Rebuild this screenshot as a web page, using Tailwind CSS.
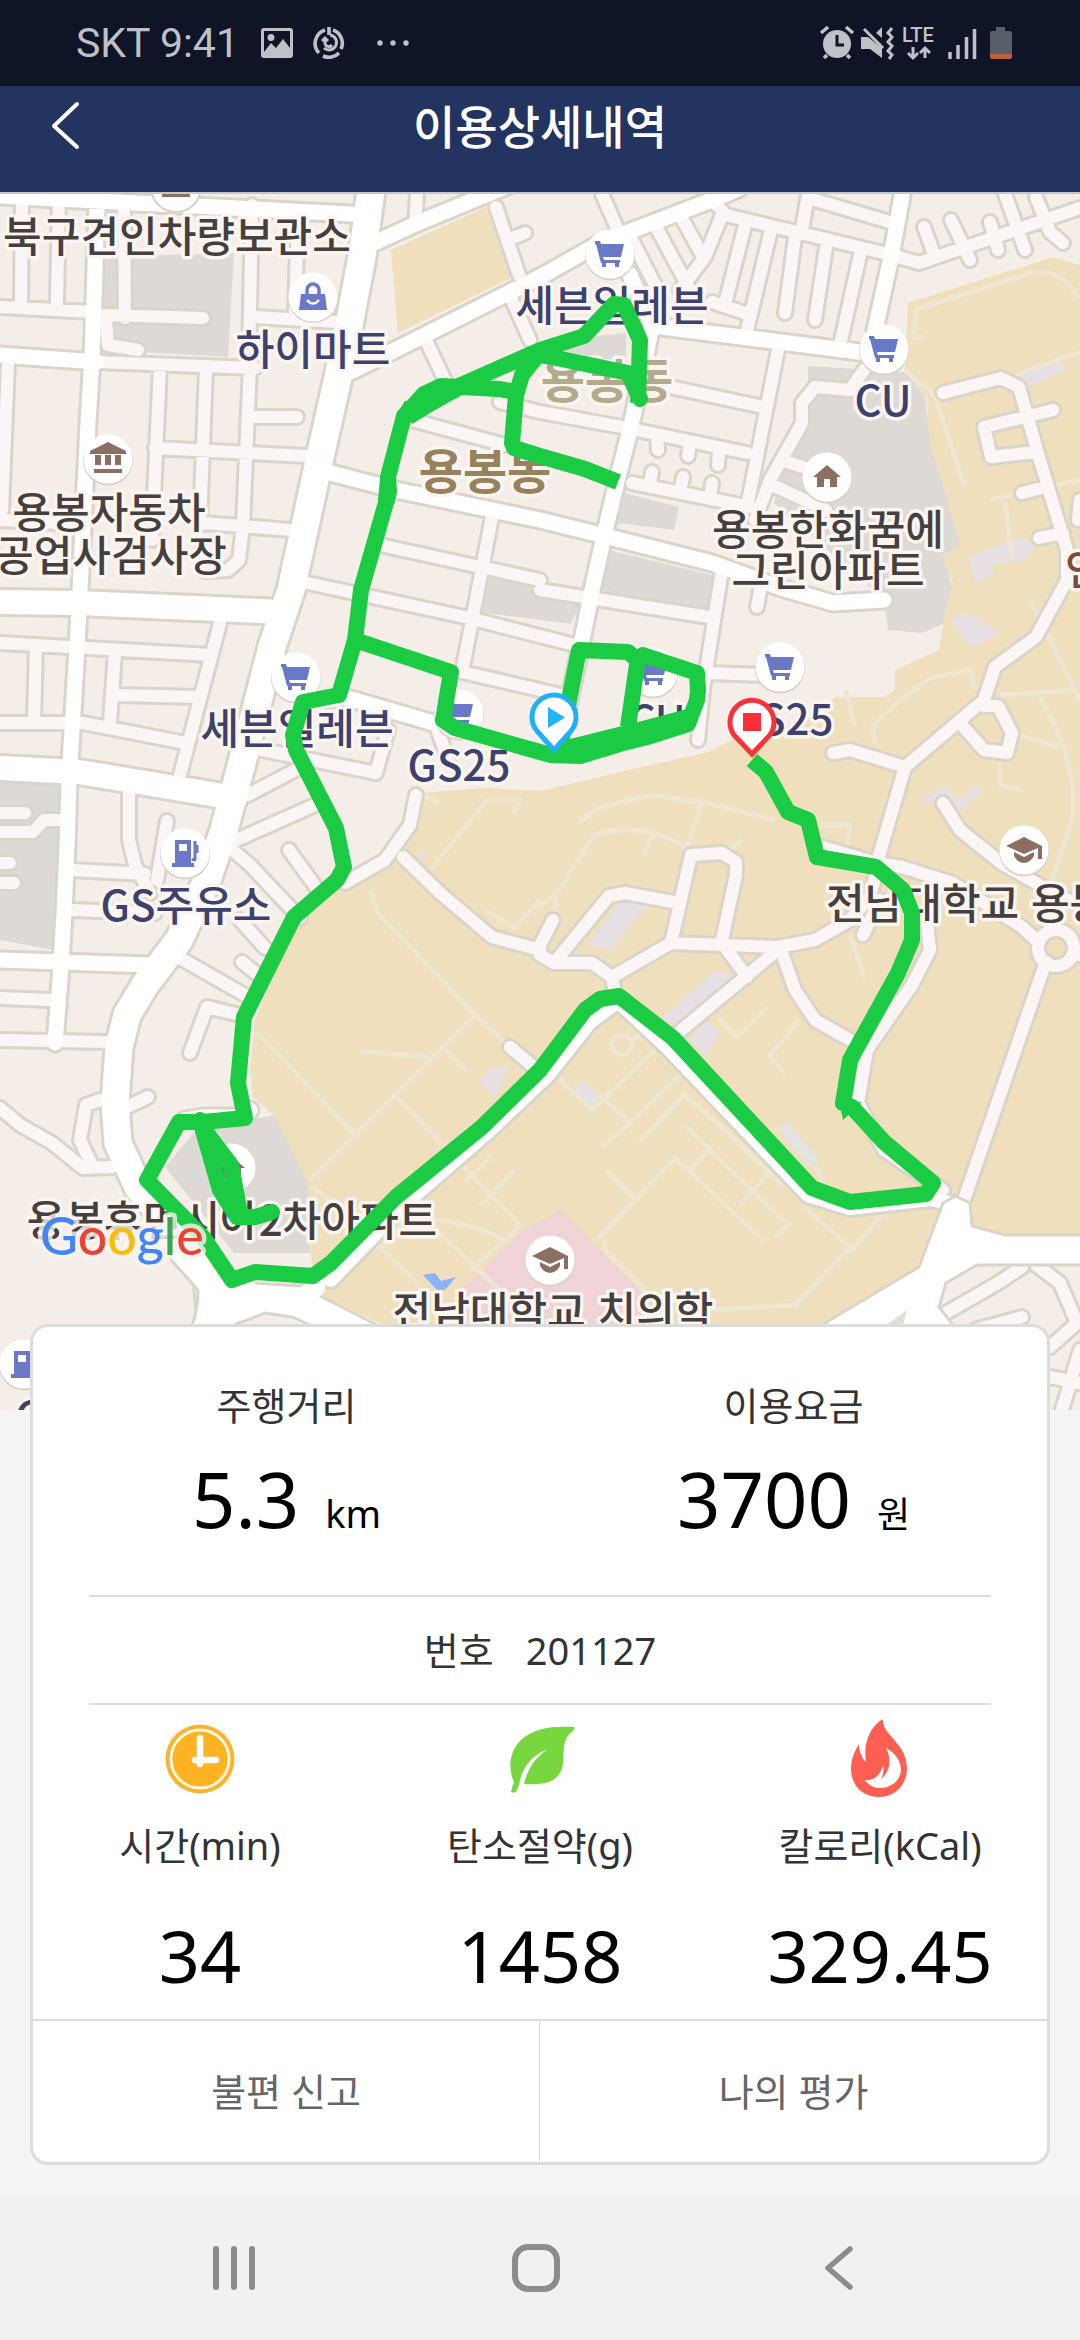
<!DOCTYPE html>
<html lang="ko">
<head>
<meta charset="utf-8">
<meta name="viewport" content="width=device-width, initial-scale=1">
<title>이용상세내역</title>
<script src="https://cdn.jsdelivr.net/npm/@tailwindcss/browser@4"></script>
</head>
<body class="flex min-h-screen flex-col bg-[#f4f4f4] font-['Noto_Sans','Noto_Sans_CJK_KR',sans-serif] text-[38px] text-[#333]">

<!-- System status bar -->
<div class="flex h-[86px] items-center justify-between bg-[#0f1526] pr-[50px] pl-[76px] text-[#bfc1c6]">
  <div class="flex items-center">
    <span class="font-['Roboto',sans-serif] text-[41px] leading-[48px]">SKT 9:41</span>
    <svg class="ml-[22px] h-8 w-8" viewBox="0 0 32 32" fill="currentColor"><path fill-rule="evenodd" d="M3 1h26a3 3 0 0 1 3 3v24a3 3 0 0 1-3 3H3a3 3 0 0 1-3-3V4a3 3 0 0 1 3-3Zm0 3v21l7-9 5 5 7-9 7 9V4H3Zm7 3a3.500 3.500 0 1 1 0 7 3.500 3.500 0 0 1 0-7Z"/></svg>
    <svg class="ml-[20px] h-8 w-8" viewBox="0 0 32 32" fill="none" stroke="currentColor" stroke-width="3.600"><path d="M12 3A14 14 0 0 0 6 26M10 29A14 14 0 0 0 26 26M28 22A14 14 0 0 0 20 3"/><path d="M17 8a7.500 7.500 0 1 1-6 13M9 14l3-3 3 3M12 12v5a4 4 0 0 0 7 1" stroke-width="3"/><path d="M16 0v8"/></svg>
    <svg class="ml-[32px] h-2 w-8" viewBox="0 0 32 8" fill="currentColor"><circle cx="3" cy="4" r="2.700"/><circle cx="16" cy="4" r="2.700"/><circle cx="29" cy="4" r="2.700"/></svg>
  </div>
  <svg class="h-16 w-[220px]" viewBox="0 0 220 64" fill="currentColor">
    <circle cx="27" cy="33" r="14"/>
    <path d="M11 22l7-6M43 22l-7-6M17 44l-3 3M37 44l3 3" stroke="currentColor" stroke-width="3.500"/>
    <path d="M27 24v10h7" fill="none" stroke="#0f1526" stroke-width="3"/>
    <path d="M51 26h7l14 11v10l-12-9h-9zM66 22l6-6v11z"/>
    <path d="M54 18l19 19" stroke="currentColor" stroke-width="3"/>
    <path d="M82 17l-4 5 4 4-4 5 4 4-4 5 4 4-3 4" fill="none" stroke="currentColor" stroke-width="3"/>
    <text x="92" y="31" class="font-['Roboto',sans-serif] text-[20px] font-medium">LTE</text>
    <path d="M103 36v11m-5-5 5 5 5-5M115 47V37m-5 5 5-5 5 5" fill="none" stroke="currentColor" stroke-width="3"/>
    <path d="M140 48v-7M148 48V34M156.500 48V26M164.500 48V18" stroke="currentColor" stroke-width="3.500"/>
    <path d="M186 16h9v4h5q2 0 2 2v11h-22V22q0-2 2-2h4zM180 33h22v10h-22z" fill="#585e68"/>
    <path d="M180 43h22v3q0 2-2 2h-18q-2 0-2-2z" fill="#c1603f"/>
  </svg>
</div>

<!-- App header -->
<header class="relative border-b-2 border-[#c5c5cc] bg-[#243461] pb-[30px] text-white">
  <a href="#" aria-label="뒤로" class="absolute top-[14px] left-[46px] block">
    <svg class="h-[52px] w-10" viewBox="0 0 40 52" fill="none" stroke="currentColor" stroke-width="4" stroke-linecap="round" stroke-linejoin="round"><path d="M31 4 8 26l23 21"/></svg>
  </a>
  <h1 class="text-center font-['Noto_Sans_CJK_KR',sans-serif] text-[46px] leading-[76px] font-medium">이용상세내역</h1>
</header>

<!-- Ride map -->
<svg class="block w-full bg-[#f5eee8]" viewBox="0 194 1080 1216" role="img" aria-label="주행 경로 지도">
  <defs>
    <path id="minor" d="M22 194L21 303M59 194L57 303M124 205L125 318M0 307L93 312M103 315L203 318M106 320L108 345L138 350M252 205L249 360M298 215L295 312M255 317L337 322M97 362L255 368
      M8 363L2 510M160 366L152 540M206 368L200 525M250 365L243 525M155 448L306 456M255 417L297 417M203 523L290 530M243 525L239 560L228 570L205 571M0 520L80 524
      M0 643L210 655M36 645L34 722M115 653L110 722M117 695L200 697M0 723L83 723L186 743M220 623L180 775M248 795L305 765M232 842L315 805M262 750L376 773L388 730
      M129 793L129 840L135 865L150 893M167 821L157 880M72 870L145 874M227 845L250 865L300 918M289 850L318 890M72 910L155 913M0 813L25 813M0 832L33 832L44 820L62 820M0 863L10 863M0 883L14 883
      M240 920L265 948M180 958L250 998M240 1015L207 1007L190 1053M242 962L262 978M0 998L50 1000M0 1040L107 1042M148 1097L127 1107M0 1108L20 1125L52 1143L83 1168L112 1167M100 1100L86 1105L80 1140L92 1165
      M417 194L415 225M496 207L519 275M515 237L525 233M425 338L447 385M512 300L530 340M412 420L505 445M380 545L485 568L540 580M492 517L462 672M303 582L465 617L575 645M462 672L540 690L560 695M540 590L709 617M722 570L703 690L698 740M708 673L765 675M760 590L757 607M436 725L448 760
      M602 194L617 228M655 225L690 290M632 240L655 285M680 215L702 255M722 215L705 257L680 290M710 198L726 215L900 257M808 194L802 230M815 200L890 222M745 225L726 300M771 230L747 330M795 237L785 313M826 247L815 320M860 255L840 345M712 302L745 313
      M898 257L919 263L1080 208M924 227L935 257M951 220L970 260M990 222L998 250M1005 194L1025 250M1036 197L1050 232L1063 243
      M778 350L747 507M670 387L763 407M500 402L540 412L622 427L747 453M632 483L750 507M657 437L658 450M690 442L688 456M719 450L718 465M652 472L650 485M683 477L680 492M712 483L710 497
      M755 520L770 480L802 423L802 403L815 387L850 390L864 370M781 460L812 470M770 484L826 510
      M943 393L1001 378L1019 387L1039 457L1067 550L1067 580L1036 637L995 667L984 700L905 767L877 863M1053 410L984 427L991 457L1035 452M1022 493L1046 487M1039 538L1063 533M1080 500L1078 520
      M984 706L998 706L1012 733L1007 753L984 750L960 723M905 767L850 750L833 753M943 803L960 830L1001 863L1057 895L1080 905
      M822 847L877 863L902 867L953 883L1022 927L1036 940M877 870L870 897L850 920L815 940L778 947L671 943L612 977L592 963L554 963L540 955L540 945L553 920
      M554 963L595 913L609 896L625 893L678 903M671 943L691 855L722 853L736 862L736 875L722 940M722 943L747 977M781 947L678 1033M781 950L795 990L815 1020L850 1040M863 935L880 900
      M926 913L930 950L912 985L867 1050L858 1103L884 1150L943 1190M416 795L410 825L385 860L345 883M403 857L440 893L492 937L540 950M510 1047L537 1070
      M1043 970L965 1197M1080 955L1074 948A18 18 0 1 0 1038 948A18 18 0 1 0 1074 948M1043 970L1047 962
      M1022 1267L998 1283L946 1313M1036 1265L1060 1283L1077 1323L1050 1347M1022 1317L975 1330M1080 1350L1062 1410M1050 1377L1080 1383M612 977L616 1000"/>
    <path id="campusroad" d="M331 1280L400 1208L490 1130L548 1075L590 1022L618 1001L668 1048L808 1195L850 1208L930 1199L960 1205"/>
    <path id="major" d="M0 196L351 214M97 205L94 300L92 357L88 423L80 590L77 647L73 713L69 780L67 847L64 913L60 980L55 1043M0 355L97 362M372 244L420 222L510 185M350 372L395 350L540 277L602 242L712 200L740 188
      M630 275L652 325L642 375L630 430L619 473L607 523L592 590L581 645L566 715M654 326L781 342L867 353M903 190L891 257L875 330M331 473L396 490L540 520L609 537L712 563L781 588L833 603L884 600M0 960L150 965M310 704L344 697L437 724M185 1120L204 1117L245 1117L250 1110"/>
    <path id="trunk" d="M371 190L362 257L349 325L339 373L320 457L291 590L272 647L248 740L224 830L207 880L179 940L145 985L127 1015L119 1047L115 1103L118 1143L138 1187L172 1227L207 1270L213 1330"/>
    <path id="cross" d="M0 602L79 603L282 612M0 768L79 772L235 798"/>
    <g id="cart"><circle cy="1.500" r="25" fill="#d8d2cb"/><circle r="24.500" fill="#fff"/><path d="M-15-13h5l1 3h23l-3 13H-7l1 3H10v3H-9l-5-19h-1zM-8 9h4v4h-4zM5 9h4v4H5z" fill="#6a78c8"/></g>
    <g id="home"><circle cy="1.500" r="25" fill="#d8d2cb"/><circle r="24.500" fill="#fff"/><path d="M0-12L14 0H10V10H3V2H-3V10H-10V0H-14z" fill="#8d6e63"/></g>
    <g id="cap"><circle cy="1.500" r="25" fill="#d8d2cb"/><circle r="24.500" fill="#fff"/><path d="M0-13L18-4V9H14V-2L0 4L-18-4zM-10 2L0 7L10 2V6Q6 13 0 13Q-6 13-10 6z" fill="#8d6e63"/></g>
    <g id="fuel"><circle cy="1.500" r="25" fill="#d8d2cb"/><circle r="24.500" fill="#fff"/><path fill-rule="evenodd" d="M-10-13H6V10H9V14H-13V10H-10zM-6-9V-2H2V-9z" fill="#6a78c8"/><path d="M10-12V6Q10 8 7 6M12-8V0" fill="none" stroke="#6a78c8" stroke-width="3"/></g>
    <g id="civic"><circle cy="1.500" r="25" fill="#d8d2cb"/><circle r="24.500" fill="#fff"/><path d="M0-17L18-8V-5H-18V-8zM-13-4H-7V6H-13zM-3-4H3V6H-3zM7-4H13V6H7zM-14 10H14V14H-14z" fill="#8d6e63"/></g>
  </defs>

  <!-- Land use -->
  <g fill="#dddad5">
    <path d="M105 257L234 253L228 357L103 350z"/>
    <path d="M808 366L905 372L925 395L930 440L960 543L945 560L953 590L945 623L922 633L888 630L884 600L845 565L774 503L781 473L791 453L808 423z"/>
    <path d="M624 493L679 507L674 530L617 523zM609 550L720 577L712 612L602 590zM486 577L585 592L571 624L478 612zM588 337L626 333L626 363L557 350z"/>
    <path d="M0 783L62 783L53 950L0 940zM165 1167L196 1130L275 1115L308 1177L310 1253L234 1253z"/>
  </g>
  <path fill="#efdfbc" d="M391 250L486 207L511 278L398 333zM420 793L485 788L540 791L620 772L712 751L740 735L800 722L836 697L884 697L895 690L895 670L939 650L945 613L953 583L943 557L960 543L929 440L927 397L905 370L908 303L1053 257L1080 265V1235H1005L970 1227L943 1203L919 1267L822 1323V1340H400L379 1323L320 1295L310 1253L308 1183L275 1117L253 1097L250 1070L255 1020L275 970L300 920L344 883L396 860L417 830z"/>
  <path fill="#efd3d7" d="M520 1233L559 1210L633 1283L670 1323V1340H440L465 1287z"/>
  <path fill="#e6e0e4" d="M588 945L618 903L650 903L610 950zM660 1020L715 970L735 975L680 1025zM688 1040L708 1020L720 1033L705 1055zM573 1090L584 1079L600 1098L588 1106zM478 1082L490 1070L510 1065L495 1097zM950 620L968 612L1000 633L972 648zM922 800L945 785L960 800L975 785L982 792L960 812zM968 557L1020 537L1035 545L1025 560L990 565L995 575L975 582zM1020 375L1062 362L1066 370L1030 386zM416 855L425 850L426 860z"/>
  <path fill="#e3e3e3" d="M778 1129L789 1121L818 1160L810 1167z"/>
  <path fill="#8ab4f8" d="M423 1275L435 1273L441 1281L456 1277L445 1290H437z"/>

  <!-- Footpaths -->
  <g fill="none" stroke="#efe6d1" stroke-width="5" stroke-linejoin="round">
    <path d="M913 336L917 309L1032 273Q1062 268 1078 298M1080 352L1010 377M912 337H925M905 370L935 395L964 486M990 500L1080 480M1005 502L1012 555M1030 600L1050 640L1080 700M1000 695L1075 690M1035 690Q1080 760 1072 820L1052 880M1010 733L1060 747M1000 755V785L1022 790M855 725L845 690M875 745L873 725L900 700L930 678L970 670L975 690"/>
    <path d="M540 905L556 895L594 835Q640 820 686 847M653 832L644 855M579 823L598 808L650 795L702 802L775 820M702 802L688 845M553 930L556 890M820 825H850L846 850M730 850L742 840M425 797L439 802M430 870L487 800H520L513 815M485 910L515 928L540 900M370 890L378 913L475 1015L505 1042M850 935L865 980"/>
    <path d="M257 1032L355 1135M360 1051L428 1057M475 1015L310 1180M395 1095L520 1225M442 1047L467 1072M492 1155L465 1182M515 1170L480 1205M310 1185L330 1200L420 1285M380 1250L440 1180M420 1215L500 1290M470 1270L522 1225M385 1240Q420 1200 505 1240"/>
    <path d="M550 1070L592 1110L660 1045M600 1095L630 1123L602 1147M630 1123L685 1070M638 1143L684 1095L725 1130L784 1187M684 1125L788 1225L775 1238M597 1240L675 1158L765 1242M605 1240V1250L645 1290M690 1170L708 1150M606 1170L636 1200M740 1205L770 1172M804 1207L850 1247L795 1305L710 1310M885 1212L848 1253M717 1017L737 1037L768 1007M800 1020L770 1055L785 1075M816 1165L824 1185"/>
    <circle cx="622" cy="1045" r="10"/><path d="M632 1040L645 1030"/>
  </g>

  <!-- Streets: casing first, then surface -->
  <g fill="none" stroke-linecap="round" stroke-linejoin="round">
    <g stroke="#dad5ca">
      <use href="#minor" stroke-width="18"/><use href="#campusroad" stroke-width="20"/><use href="#major" stroke-width="21"/><use href="#cross" stroke-width="30"/><use href="#trunk" stroke-width="33"/>
    </g>
    <use href="#minor" stroke="#fcf5f5" stroke-width="12"/>
    <g stroke="#fff"><use href="#campusroad" stroke-width="14"/><use href="#major" stroke-width="15"/><use href="#cross" stroke-width="24"/><use href="#trunk" stroke-width="27"/></g>
  </g>
  <g fill="#fff" stroke="#dad5ca" stroke-width="3">
    <path stroke="none" d="M150 1200L180 1215L234 1283L262 1280L300 1286L331 1270L322 1296L379 1326V1345H320L292 1317L265 1313L234 1325L225 1345H192L198 1290L165 1253z"/>
    <path d="M198 1290L165 1253M320 1296L379 1326M192 1325Q198 1310 198 1290M234 1325L265 1313L292 1317L312 1326M255 1283L300 1286L308 1280" fill="none"/>
    <path d="M943 1203L955 1196L970 1203L972 1226L1005 1235H1084V1265H977L946 1283L939 1307L965 1340H800L830 1320L919 1267z"/>
  </g>
  <path d="M888 1324L907 1310L902 1330z" fill="#e5ddd4"/>

  <!-- Places -->
  <circle cx="176" cy="187" r="25" fill="#fff" stroke="#d8d2cb" stroke-width="2"/><path d="M162 194H190V197H162z" fill="#8d6e63"/>
  <use href="#civic" x="108" y="459"/>
  <circle cx="313" cy="298" r="25" fill="#d8d2cb"/><circle cx="313" cy="297" r="24.500" fill="#fff"/>
  <path d="M301 294H325L327 310H299z" fill="#6a78c8"/><path d="M307 295V290A6 6 0 0 1 319 290V295" fill="none" stroke="#6a78c8" stroke-width="3.500"/><path d="M307 300Q313 307 319 300" fill="none" stroke="#fff" stroke-width="2.500"/>
  <use href="#cart" x="610" y="254"/><use href="#cart" x="884" y="349"/><use href="#home" x="827" y="477"/><use href="#cart" x="296" y="677"/><use href="#cart" x="459" y="714"/>
  <use href="#fuel" x="185" y="853"/><use href="#cart" x="653" y="672"/><use href="#cart" x="780" y="667"/><use href="#cap" x="1024" y="850"/><use href="#home" x="231" y="1168"/><use href="#cap" x="550" y="1260"/><use href="#fuel" x="24" y="1364"/>

  <g class="font-['Noto_Sans_CJK_KR',sans-serif] text-[42px] font-medium" text-anchor="middle" fill="#45403d" stroke="#faf5f1" stroke-width="7" stroke-linejoin="round" paint-order="stroke">
    <text x="177" y="252">북구견인차량보관소</text>
    <text x="109" y="528">용봉자동차</text>
    <text x="111" y="571">공업사검사장</text>
    <text x="828" y="545">용봉한화꿈에</text>
    <text x="828" y="586">그린아파트</text>
    <text x="826" y="919" text-anchor="start">전남대학교 용봉캠퍼스</text>
    <text x="232" y="1236">용봉휴먼시아2차아파트</text>
    <text x="553" y="1327">전남대학교 치의학</text>
    <text x="1065" y="585" text-anchor="start" fill="#7b4a3a">인문대학</text>
    <g fill="#3e416b">
      <text x="313" y="365">하이마트</text>
      <text x="612" y="321">세븐일레븐</text>
      <text x="883" y="416">CU</text>
      <text x="297" y="744">세븐일레븐</text>
      <text x="459" y="781">GS25</text>
      <text x="186" y="921">GS주유소</text>
      <text x="657" y="736">CU</text>
      <text x="782" y="735">GS25</text>
      <text x="15" y="1432" text-anchor="start">GS25</text>
    </g>
    <g class="text-[48px] font-bold">
      <text x="485" y="489" fill="#97825c">용봉동</text>
      <text x="607" y="398" fill="#b3aa8b">용봉동</text>
    </g>
  </g>

  <!-- Ridden route -->
  <g fill="none" stroke="#1bcb43" stroke-width="16" stroke-linejoin="round">
    <path d="M618 482L585 469L540 456L514 448L512 443L516 395L522 375L538 355L547 356L628 373L640 399L635 385M638 403L640 340L624 305L614 304L584 336L540 350L461 385L406 416"/>
    <path d="M516 392L499 389L441 386L424 394L404 416L388 477L389 492L361 590L355 640L339 695L303 702L293 735L296 750L336 828L344 867L337 880L294 917L244 1017L238 1083L245 1118L203 1122L179 1122L147 1180L203 1237L232 1280L255 1272L313 1276L331 1263L396 1197L482 1127L540 1070L585 1010L600 999L619 996L673 1038L812 1188L850 1202L926 1194L933 1183L884 1142L852 1107L843 1103L850 1060L898 973L912 940V913L903 890L876 867L817 857L808 820L788 812L766 772L752 760"/>
    <path d="M200 1120L220 1190L237 1217L255 1217L272 1212M203 1128L231 1165L240 1213" stroke-linecap="round"/>
    <path d="M438 388L455 390L406 416L412 404M355 640L451 672L443 720L455 728L540 752L551 755L580 756L623 743L647 737L688 724L697 700L698 690L697 673L643 655L638 658L628 727M560 748L569 700L579 650L628 652L640 662M551 752L595 741L643 729L688 717"/>
  </g>
  <path d="M565 745L600 740L640 728L645 740L582 762H552zM410 400L460 380V395L412 424zM380 478L397 490L394 505L378 500zM840 1105L862 1102L843 1120z" fill="#1bcb43"/>

  <!-- Start and end pins -->
  <g stroke-width="5" fill="#fff">
    <path d="M554 750L537 731A22 22 0 1 1 571 731z" stroke="#22b0f5"/>
    <path d="M548 707V728L565 717.500z" fill="#1fb4fb"/>
    <path d="M752 754L734 735A22 22 0 1 1 770 735z" stroke="#fa303a"/>
    <path d="M743 713H761V731H743z" fill="#fc2d37"/>
  </g>

  <text x="40" y="1255" class="font-['Lato',sans-serif] text-[52px] font-medium" stroke="#f7f3ee" stroke-opacity=".8" stroke-width="9" paint-order="stroke" stroke-linejoin="round"><tspan fill="#4285f4">G</tspan><tspan fill="#ea4335">o</tspan><tspan fill="#fbbc05">o</tspan><tspan fill="#4285f4">g</tspan><tspan fill="#34a853">l</tspan><tspan fill="#ea4335">e</tspan></text>
</svg>

<!-- Ride summary -->
<main class="relative mx-[30px] -mt-[86px] mb-[30px] overflow-hidden rounded-[18px] border-[3px] border-[#dcdcdc] bg-white">
  <dl class="grid grid-cols-2 pt-[50px] pb-[46px] text-center">
    <div>
      <dt class="leading-[56px]">주행거리</dt>
      <dd class="mt-[16px] flex items-baseline justify-center gap-[26px] text-black"><span class="text-[76px] leading-[100px]">5.3</span><span class="leading-[56px]">km</span></dd>
    </div>
    <div>
      <dt class="leading-[56px]">이용요금</dt>
      <dd class="mt-[16px] flex items-baseline justify-center gap-[26px] text-black"><span class="text-[76px] leading-[100px]">3700</span><span class="text-[36px] leading-[56px]">원</span></dd>
    </div>
  </dl>
  <dl class="mx-14 flex justify-center gap-[32px] border-y-2 border-[#dcdcdc] leading-[106px]">
    <dt>번호</dt>
    <dd>201127</dd>
  </dl>
  <dl class="-mx-[3px] grid grid-cols-3 pt-[14px] pb-[14px] text-center">
    <div>
      <dt class="leading-[56px]">
        <svg class="mx-auto mb-[20px] h-[78px] w-[78px]" viewBox="0 0 78 78"><circle cx="39" cy="40" r="34.500" fill="#f9b233"/><circle cx="39" cy="40" r="29" fill="#ffb224" stroke="#fff9d8" stroke-width="3"/><path d="M39 19V45M34 41H55" stroke="#fff" stroke-width="6.500" stroke-linecap="round"/></svg>
        시간(min)
      </dt>
      <dd class="mt-[32px] text-[72px] leading-[100px] text-black">34</dd>
    </div>
    <div>
      <dt class="leading-[56px]">
        <svg class="mx-auto mb-[20px] h-[78px] w-[78px]" viewBox="0 0 78 78" fill="#78d63f"><path d="M73 8Q74 9 73 11C58 22 65 36 61 50C55 65 40 66 23 65C27 48 35 38 47 30C31 36 21 48 18 66L15 73Q12 74 10 73Q11 68 13 63C7 49 8 34 19 22C33 8 53 7 73 8Z"/></svg>
        탄소절약(g)
      </dt>
      <dd class="mt-[32px] text-[72px] leading-[100px] text-black">1458</dd>
    </div>
    <div>
      <dt class="leading-[56px]">
        <svg class="mx-auto mb-[20px] h-[78px] w-[78px]" viewBox="0 0 78 78"><path d="M42 0C40 15 66 24 66 49C66 66 54 78 38 78C21 78 10 66 10 50C10 39 14 32 18 25C18 33 21 39 25 43C22 26 28 8 42 0Z" fill="#ff5f53"/><path d="M45 29C55 34 60 43 60 52C58 64 48 69 39 69C31 69 26 64 24 61C34 62 40 55 42 46C43 51 42 56 40 60C49 53 51 40 45 29Z" fill="#fff"/></svg>
        칼로리(kCal)
      </dt>
      <dd class="mt-[32px] text-[72px] leading-[100px] text-black">329.45</dd>
    </div>
  </dl>
  <div class="grid grid-cols-2 border-t-2 border-[#dcdcdc] text-[#666]">
    <button type="button" class="border-r border-[#dcdcdc] leading-[141px]">불편 신고</button>
    <button type="button" class="leading-[141px]">나의 평가</button>
  </div>
</main>

<!-- System navigation -->
<nav class="mt-auto grid h-[144px] grid-cols-3 place-items-center bg-[#f1f1f1] pr-[90px] pl-[83px] text-[#8c8c8c]">
  <button type="button" aria-label="최근 앱"><svg class="h-[50px] w-[50px]" viewBox="0 0 50 50" stroke="currentColor" stroke-width="6" stroke-linecap="round"><path d="M7 6V44M25 6V44M43 6V44"/></svg></button>
  <button type="button" aria-label="홈"><svg class="h-[50px] w-[50px]" viewBox="0 0 50 50" fill="none" stroke="currentColor" stroke-width="6"><rect x="4" y="4" width="42" height="42" rx="13"/></svg></button>
  <button type="button" aria-label="뒤로"><svg class="h-[50px] w-[50px]" viewBox="0 0 50 50" fill="none" stroke="currentColor" stroke-width="5.500" stroke-linecap="round" stroke-linejoin="round"><path d="M36 6 14 25l22 19"/></svg></button>
</nav>
</body>
</html>
